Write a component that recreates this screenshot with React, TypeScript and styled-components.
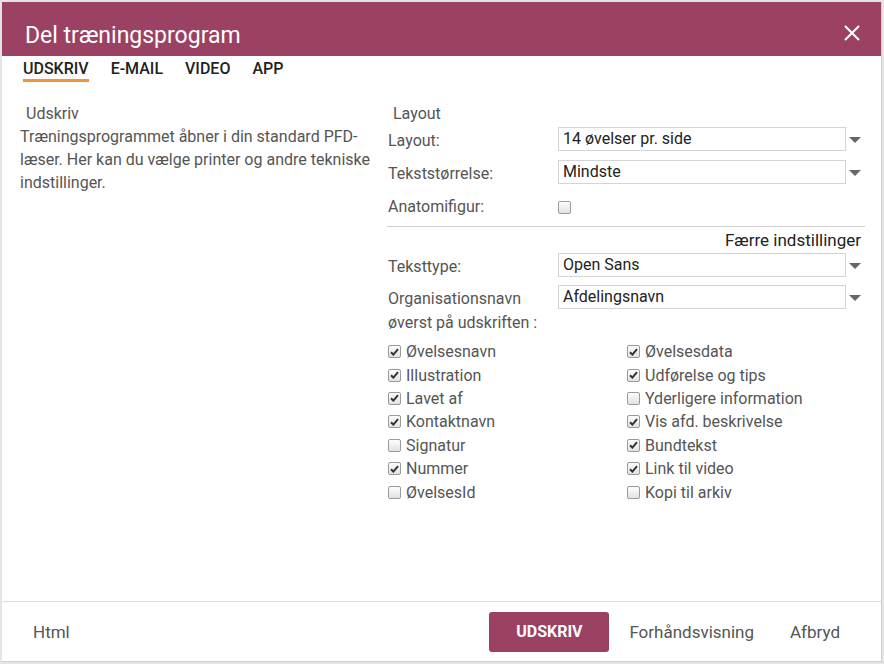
import React from "react";
import styled, { createGlobalStyle } from "styled-components";

const Global = createGlobalStyle`
  html, body { margin: 0; padding: 0; }
  body {
    background: #e4e4e4;
    font-family: Roboto, "Liberation Sans", Arial, sans-serif;
    width: 884px;
    height: 664px;
    overflow: hidden;
  }
  * { box-sizing: border-box; }
`;

const Dialog = styled.div`
  margin: 2px 0 0 2px;
  width: 880px;
  height: 660px;
  background: #fff;
  border-right: 1px solid #cfcfcf;
  border-bottom: 1px solid #cfcfcf;
  display: flex;
  flex-direction: column;
`;

const Header = styled.div`
  height: 54px;
  background: #9b4163;
  display: flex;
  align-items: flex-start;
  justify-content: space-between;
  padding: 19px 21px 0 23px;
  flex-shrink: 0;
`;

const Title = styled.h1`
  margin: 0;
  font-size: 23px;
  line-height: 29px;
  font-weight: 400;
  color: #fff;
`;

const CloseButton = styled.button`
  border: 0;
  background: transparent;
  padding: 0;
  margin-top: 4px;
  width: 16px;
  height: 16px;
  display: flex;
  cursor: pointer;
`;

const Tabs = styled.div`
  display: flex;
  gap: 22px;
  padding: 4px 0 0 21px;
  height: 26px;
  flex-shrink: 0;
`;

const Tab = styled.div<{ $active?: boolean }>`
  font-size: 16px;
  font-weight: 500;
  color: #222;
  height: 22px;
  line-height: 18px;
  border-bottom: 3px solid ${(p) => (p.$active ? "#f0963a" : "transparent")};
`;

const Content = styled.div`
  flex: 1;
  display: grid;
  grid-template-columns: 368px minmax(0, 1fr);
  padding: 22px 20px 0 18px;
`;

const LeftCol = styled.div`
  display: flex;
  flex-direction: column;
`;

const SectionTitle = styled.div<{ $indent: number }>`
  font-size: 16px;
  color: #555;
  line-height: 20px;
  padding-left: ${(p) => p.$indent}px;
`;

const Paragraph = styled.p`
  margin: 1px 0 0;
  font-size: 16px;
  line-height: 23px;
  color: #555;
  width: 352px;
`;

const RightCol = styled.div`
  display: flex;
  flex-direction: column;
`;

const FormRow = styled.div<{ $mt: number }>`
  display: grid;
  grid-template-columns: 170px 288px 1fr;
  align-items: start;
  margin-top: ${(p) => p.$mt}px;
`;

const Label = styled.div`
  font-size: 16px;
  color: #555;
  line-height: 24px;
  padding-top: 2px;
`;

const SelectBox = styled.div`
  height: 24px;
  border: 1px solid #d4d4d4;
  font-size: 16px;
  color: #222;
  padding-left: 4px;
  line-height: 22px;
`;

const CheckCell = styled.div`
  padding-top: 6px;
`;

const Arrow = styled.div`
  margin: 10px 0 0 3px;
  width: 0;
  height: 0;
  border-left: 6px solid transparent;
  border-right: 6px solid transparent;
  border-top: 6px solid #666;
`;

const Divider = styled.hr`
  border: 0;
  border-top: 1px solid #cfcfcf;
  margin: 7px 0 0 -1px;
  width: calc(100% + 5px);
`;

const FewerLink = styled.div`
  align-self: flex-end;
  font-size: 17px;
  color: #222;
  line-height: 20px;
  margin-top: 3px;
`;

const CheckGrid = styled.div`
  display: grid;
  grid-template-columns: 239px 1fr;
  grid-auto-rows: 23.4px;
  margin-top: 5px;
`;

const CheckItem = styled.label`
  display: flex;
  align-items: center;
  gap: 5px;
  font-size: 16px;
  color: #555;
`;

const Box = styled.span`
  width: 13px;
  height: 13px;
  border: 1px solid #9a9a9a;
  border-radius: 2px;
  background: linear-gradient(#fdfdfd, #e2e2e2);
  display: inline-flex;
  align-items: center;
  justify-content: center;
  flex-shrink: 0;
`;

const Footer = styled.div`
  height: 60px;
  border-top: 1px solid #dcdcdc;
  display: flex;
  align-items: center;
  padding: 0 41px 0 31px;
  flex-shrink: 0;
`;

const TextButton = styled.button<{ $ml?: number }>`
  border: 0;
  background: transparent;
  font-family: inherit;
  font-size: 17px;
  color: #555;
  padding: 0;
  margin-left: ${(p) => p.$ml ?? 0}px;
  cursor: pointer;
`;

const PrimaryButton = styled.button`
  margin-left: auto;
  width: 120px;
  height: 40px;
  border: 0;
  border-radius: 3px;
  background: #9b4163;
  color: #fff;
  font-family: inherit;
  font-size: 16px;
  font-weight: 700;
  cursor: pointer;
`;

const Check = ({ checked }: { checked?: boolean }) => (
  <Box>
    {checked && (
      <svg width="9" height="8" viewBox="0 0 9 8">
        <path d="M1 4.2 L3.4 6.6 L8 1.2" fill="none" stroke="#333" strokeWidth="2" />
      </svg>
    )}
  </Box>
);

const checks: [string, boolean][] = [
  ["Øvelsesnavn", true],
  ["Øvelsesdata", true],
  ["Illustration", true],
  ["Udførelse og tips", true],
  ["Lavet af", true],
  ["Yderligere information", false],
  ["Kontaktnavn", true],
  ["Vis afd. beskrivelse", true],
  ["Signatur", false],
  ["Bundtekst", true],
  ["Nummer", true],
  ["Link til video", true],
  ["ØvelsesId", false],
  ["Kopi til arkiv", false],
];

export default function App() {
  return (
    <>
      <Global />
      <Dialog>
        <Header>
          <Title>Del træningsprogram</Title>
          <CloseButton aria-label="Luk">
            <svg width="16" height="16" viewBox="0 0 16 16">
              <path d="M1 1 L15 15 M15 1 L1 15" stroke="#fff" strokeWidth="2" />
            </svg>
          </CloseButton>
        </Header>
        <Tabs>
          <Tab $active>UDSKRIV</Tab>
          <Tab>E-MAIL</Tab>
          <Tab>VIDEO</Tab>
          <Tab>APP</Tab>
        </Tabs>
        <Content>
          <LeftCol>
            <SectionTitle $indent={6}>Udskriv</SectionTitle>
            <Paragraph>
              Træningsprogrammet åbner i din standard PFD-læser. Her kan du vælge printer og andre
              tekniske indstillinger.
            </Paragraph>
          </LeftCol>
          <RightCol>
            <SectionTitle $indent={5}>Layout</SectionTitle>
            <FormRow $mt={3}>
              <Label>Layout:</Label>
              <SelectBox>14 øvelser pr. side</SelectBox>
              <Arrow />
            </FormRow>
            <FormRow $mt={7}>
              <Label>Tekststørrelse:</Label>
              <SelectBox>Mindste</SelectBox>
              <Arrow />
            </FormRow>
            <FormRow $mt={7}>
              <Label>Anatomifigur:</Label>
              <CheckCell>
                <Check />
              </CheckCell>
            </FormRow>
            <Divider />
            <FewerLink>Færre indstillinger</FewerLink>
            <FormRow $mt={3}>
              <Label>Teksttype:</Label>
              <SelectBox>Open Sans</SelectBox>
              <Arrow />
            </FormRow>
            <FormRow $mt={6}>
              <Label>
                Organisationsnavn
                <br />
                øverst på udskriften :
              </Label>
              <SelectBox>Afdelingsnavn</SelectBox>
              <Arrow />
            </FormRow>
            <CheckGrid>
              {checks.map(([name, c]) => (
                <CheckItem key={name}>
                  <Check checked={c} />
                  {name}
                </CheckItem>
              ))}
            </CheckGrid>
          </RightCol>
        </Content>
        <Footer>
          <TextButton>Html</TextButton>
          <PrimaryButton>UDSKRIV</PrimaryButton>
          <TextButton $ml={20}>Forhåndsvisning</TextButton>
          <TextButton $ml={36}>Afbryd</TextButton>
        </Footer>
      </Dialog>
    </>
  );
}
